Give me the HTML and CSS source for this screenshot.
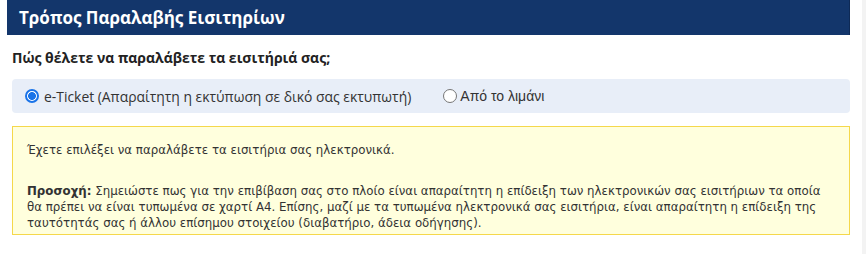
FILE: index.html
```html
<!DOCTYPE html>
<html lang="el">
<head>
<meta charset="utf-8">
<title>Τρόπος Παραλαβής Εισιτηρίων</title>
<link rel="stylesheet" href="styles.css">
</head>
<body>
<div class="page">
  <main class="panel">
    <h2 class="panel-title">Τρόπος Παραλαβής Εισιτηρίων</h2>
    <div class="panel-body">
      <p class="question">Πώς θέλετε να παραλάβετε τα εισιτήριά σας;</p>
      <div class="options">
        <label class="option option-eticket">
          <span class="radio checked"></span>
          <span>e-Ticket (Απαραίτητη η εκτύπωση σε δικό σας εκτυπωτή)</span>
        </label>
        <label class="option option-port">
          <span class="radio"></span>
          <span>Από το λιμάνι</span>
        </label>
      </div>
      <div class="notice">
        <p>Έχετε επιλέξει να παραλάβετε τα εισιτήρια σας ηλεκτρονικά.</p>
        <p><strong>Προσοχή:</strong> Σημειώστε πως για την επιβίβαση σας στο πλοίο είναι απαραίτητη η επίδειξη των ηλεκτρονικών σας εισιτήριων τα οποία θα πρέπει να είναι τυπωμένα σε χαρτί A4. Επίσης, μαζί με τα τυπωμένα ηλεκτρονικά σας εισιτήρια, είναι απαραίτητη η επίδειξη της ταυτότητάς σας ή άλλου επίσημου στοιχείου (διαβατήριο, άδεια οδήγησης).</p>
      </div>
    </div>
  </main>
  <div class="scroll-gutter"></div>
</div>
</body>
</html>
```

FILE: styles.css
```css
html, body {
  margin: 0;
  padding: 0;
  background: #ffffff;
}

.page {
  display: flex;
  height: 254px;
  overflow: hidden;
}

.panel {
  margin-left: 7px;
  width: 843px;
  flex: none;
}

.scroll-gutter {
  margin-left: 12px;
  flex: 1;
  background: #f3f3f3;
}

.panel-title {
  margin: 0;
  height: 35px;
  line-height: 35px;
  padding-left: 12px;
  background: #13366b;
  border-right: 1px solid #0e2a56;
  color: #ffffff;
  font-family: "Open Sans", "DejaVu Sans", sans-serif;
  font-size: 17px;
  font-weight: 700;
}

.panel-body {
  padding-left: 5px;
}

.question {
  margin: 13px 0 0;
  height: 20px;
  line-height: 20px;
  font-family: "Open Sans", "DejaVu Sans", sans-serif;
  font-size: 14px;
  font-weight: 700;
  color: #222222;
}

.options {
  margin-top: 11px;
  height: 34px;
  display: flex;
  align-items: center;
  gap: 32px;
  padding-left: 13px;
  background: #e8eef8;
  border-radius: 4px;
}

.option {
  display: flex;
  align-items: center;
  gap: 5px;
  color: #333333;
}

.option-eticket {
  font-family: "Open Sans", "DejaVu Sans", sans-serif;
  font-size: 13.9px;
}

.option-port {
  font-family: "Liberation Sans", Arial, sans-serif;
  font-size: 14px;
  gap: 3px;
}

.radio {
  width: 12px;
  height: 12px;
  border: 1px solid #767676;
  border-radius: 50%;
  background: #ffffff;
  flex: none;
  box-sizing: content-box;
}

.radio.checked {
  border: 2px solid #1a73e8;
  width: 10px;
  height: 10px;
  background: radial-gradient(circle, #1a73e8 0 3.6px, #ffffff 4.2px);
}

.notice {
  margin-top: 13px;
  height: 109px;
  box-sizing: border-box;
  padding: 15px 22px 0 14px;
  background: #ffffdd;
  border: 1px solid #f5d84b;
  font-family: "DejaVu Sans", Verdana, sans-serif;
  font-size: 11.8px;
  line-height: 16px;
  color: #333333;
}

.notice p {
  margin: 0 0 25px;
}
```
